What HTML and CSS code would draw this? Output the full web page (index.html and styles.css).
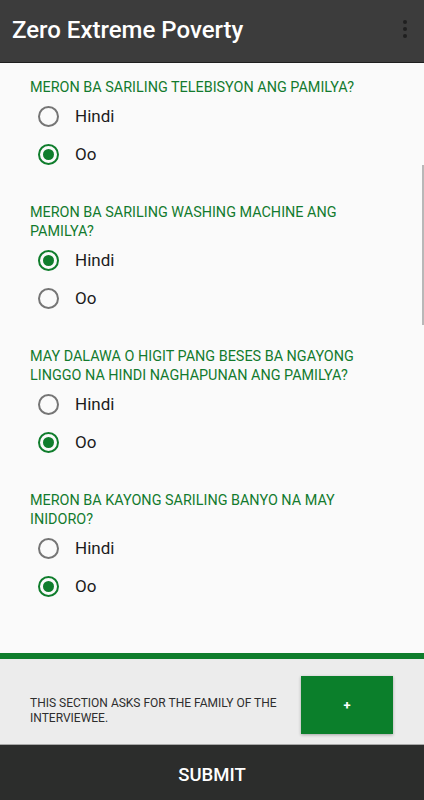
FILE: index.html
```html
<!DOCTYPE html>
<html>
<head>
<meta charset="utf-8">
<link rel="stylesheet" href="styles.css">
</head>
<body>
<div class="app">
  <header class="appbar">
    <h1 class="title">Zero Extreme Poverty</h1>
    <div class="menu"><span></span><span></span><span></span></div>
  </header>
  <main class="content">
    <div class="scrollbar"></div>
    <section class="question">
      <p class="qtext">MERON BA SARILING TELEBISYON ANG PAMILYA?</p>
      <div class="option"><span class="radio"></span><span class="label">Hindi</span></div>
      <div class="option"><span class="radio checked"></span><span class="label">Oo</span></div>
    </section>
    <section class="question">
      <p class="qtext">MERON BA SARILING WASHING MACHINE ANG PAMILYA?</p>
      <div class="option"><span class="radio checked"></span><span class="label">Hindi</span></div>
      <div class="option"><span class="radio"></span><span class="label">Oo</span></div>
    </section>
    <section class="question">
      <p class="qtext">MAY DALAWA O HIGIT PANG BESES BA NGAYONG LINGGO NA HINDI NAGHAPUNAN ANG PAMILYA?</p>
      <div class="option"><span class="radio"></span><span class="label">Hindi</span></div>
      <div class="option"><span class="radio checked"></span><span class="label">Oo</span></div>
    </section>
    <section class="question">
      <p class="qtext">MERON BA KAYONG SARILING BANYO NA MAY INIDORO?</p>
      <div class="option"><span class="radio"></span><span class="label">Hindi</span></div>
      <div class="option"><span class="radio checked"></span><span class="label">Oo</span></div>
    </section>
  </main>
  <div class="divider"></div>
  <div class="panel">
    <p class="panel-text">THIS SECTION ASKS FOR THE FAMILY OF THE INTERVIEWEE.</p>
    <button class="add">+</button>
  </div>
  <footer class="submit">SUBMIT</footer>
</div>
</body>
</html>
```

FILE: styles.css
```css
* { box-sizing: border-box; }
html, body { margin: 0; padding: 0; }
body {
  font-family: Roboto, "Noto Sans", "Liberation Sans", sans-serif;
  background: #fafafa;
}
.app {
  width: 424px;
  height: 800px;
  display: flex;
  flex-direction: column;
  overflow: hidden;
}
.appbar {
  height: 63px;
  flex: none;
  background: #3c3c3c;
  border-bottom: 1px solid #1e1e1e;
  display: flex;
  align-items: center;
  justify-content: space-between;
  padding: 0 17px 0 12px;
}
.title {
  margin: 0;
  color: #fff;
  font-size: 24px;
  font-weight: 500;
  letter-spacing: 0;
  padding-bottom: 2px;
}
.menu {
  display: flex;
  flex-direction: column;
  gap: 2.5px;
  padding-bottom: 4px;
}
.menu span {
  width: 4.5px;
  height: 4.5px;
  border-radius: 50%;
  background: #1f1f1f;
}
.content {
  flex: 1 1 auto;
  min-height: 0;
  position: relative;
  background: #fafafa;
  padding: 15px 30px 0 30px;
}
.scrollbar {
  position: absolute;
  right: 0;
  top: 102px;
  width: 2px;
  height: 160px;
  background: #b8b8b8;
}
.question { margin-bottom: 30px; }
.qtext {
  margin: 0;
  color: #137a2e;
  font-size: 14.4px;
  line-height: 19px;
  letter-spacing: 0;
}
.option {
  height: 38px;
  display: flex;
  align-items: center;
  padding-left: 8px;
}
.radio {
  width: 21px;
  height: 21px;
  border-radius: 50%;
  border: 2.2px solid #757575;
  display: flex;
  align-items: center;
  justify-content: center;
  margin-right: 16px;
}
.radio.checked { border-color: #0f7d2c; }
.radio.checked::after {
  content: "";
  width: 11px;
  height: 11px;
  border-radius: 50%;
  background: #0f7d2c;
}
.label {
  font-size: 17px;
  color: #1c1c1c;
}
.divider {
  height: 6px;
  flex: none;
  background: #0f7d2c;
}
.panel {
  height: 86px;
  flex: none;
  background: #ececec;
  border-bottom: 1px solid #a8a8a8;
  display: flex;
  align-items: flex-start;
  justify-content: space-between;
  padding: 17px 31px 0 30px;
}
.panel-text {
  margin: 20px 0 0;
  width: 260px;
  font-size: 12px;
  line-height: 15px;
  color: #2e2e2e;
}
.add {
  width: 92px;
  height: 58px;
  border: none;
  background: #0b7f2b;
  color: #fff;
  font-family: Roboto, sans-serif;
  font-weight: 700;
  font-size: 13px;
  box-shadow: 0 1px 3px rgba(0,0,0,0.3);
  padding: 0;
}
.submit {
  height: 55px;
  flex: none;
  background: #2c2d2c;
  color: #fff;
  display: flex;
  align-items: center;
  justify-content: center;
  font-size: 18.5px;
  font-weight: 500;
  padding-top: 4px;
}
```
